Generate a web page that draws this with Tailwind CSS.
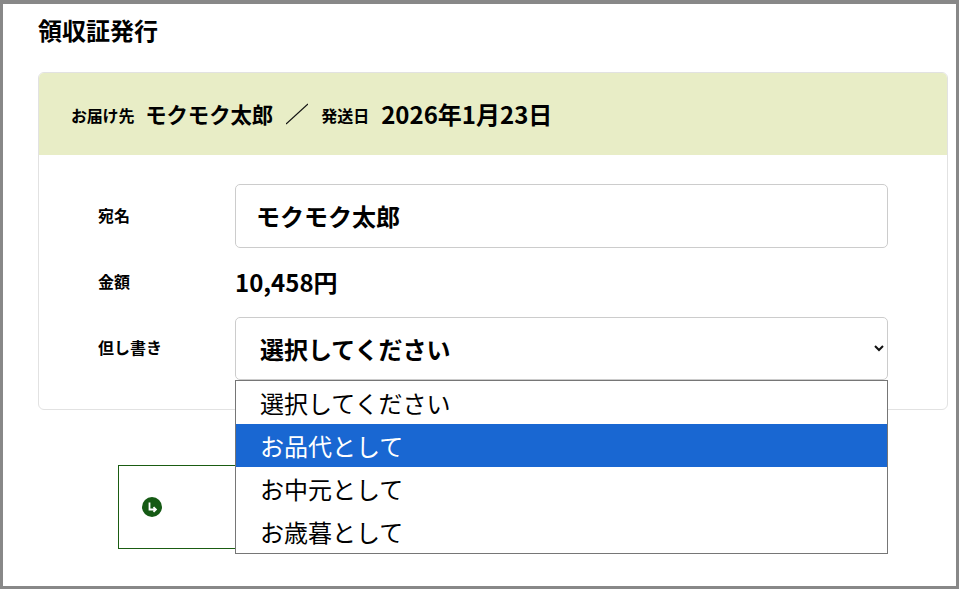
<!DOCTYPE html>
<html lang="ja">
<head>
<meta charset="utf-8">
<script src="https://cdn.jsdelivr.net/npm/@tailwindcss/browser@4"></script>
</head>
<body class="m-0 bg-white">
<div class="relative box-border h-[589px] w-[959px] overflow-hidden border-x-[3px] border-t-[4px] border-b-[3px] border-[#888888] bg-white pl-[35px] pr-[8px] font-['Noto_Sans_CJK_JP','Noto_Sans',sans-serif] text-black">
  <h1 class="m-0 h-[68px] pt-[9px] text-[24px] leading-[34px] font-bold">領収証発行</h1>
  <section class="h-[338px] overflow-hidden rounded-[6px] border border-[#e2e2e2]">
    <div class="flex h-[82px] items-center gap-[13px] bg-[#e8edc6] pl-[32px] font-bold">
      <span class="mt-[2px] text-[16px] tracking-[-0.2px]">お届け先</span>
      <span class="ml-[-2px] text-[21.33px]">モクモク太郎</span>
      <svg width="22" height="22" viewBox="0 0 22 22"><path d="M0 21L22 1" stroke="#111" stroke-width="1.2" fill="none"/></svg>
      <span class="mt-[2px] text-[16px]">発送日</span>
      <span class="ml-[-1px] text-[24px]">2026年1月23日</span>
    </div>
    <div class="grid grid-cols-[137px_653px] pl-[59px] pt-[29px] font-bold">
      <div class="flex h-[64px] items-center pb-[3px] text-[16px]">宛名</div>
      <div class="flex h-[64px] items-center rounded-[5px] border border-[#cccccc] pl-[20px] text-[24px]">モクモク太郎</div>
      <div class="flex h-[69px] items-center pb-[3px] text-[16px]">金額</div>
      <div class="flex h-[69px] items-center pb-[2px] text-[24px]">10,458円</div>
      <div class="flex h-[63px] items-center pb-[4px] text-[16px]">但し書き</div>
      <div class="flex h-[63px] items-center justify-between rounded-[5px] border border-[#cccccc] pl-[24px] pr-[3px] text-[24px]">
        <span>選択してください</span>
        <svg width="10" height="7" viewBox="0 0 10 7"><path d="M1 1l4 4 4-4" stroke="#111" stroke-width="2" fill="none"/></svg>
      </div>
    </div>
  </section>
  <div class="mt-[55px] ml-[80px] flex h-[84px] w-[400px] items-center border border-[#1a5c12] pl-[23px]">
    <svg width="20" height="20" viewBox="0 0 20 20"><circle cx="10" cy="10" r="10" fill="#155a14"/><path d="M7.5 5.5v7h6M11.5 10.2l2.4 2.3-2.4 2.3" stroke="#fff" stroke-width="1.8" fill="none"/></svg>
  </div>
  <ul class="absolute top-[376px] left-[232px] m-0 w-[653px] list-none border border-[#767676] bg-white p-0 text-[24px] leading-[43px]">
    <li class="h-[43px] pl-[24px]">選択してください</li>
    <li class="h-[43px] bg-[#1967d2] pl-[24px] text-white">お品代として</li>
    <li class="h-[43px] pl-[24px]">お中元として</li>
    <li class="h-[43px] pl-[24px]">お歳暮として</li>
  </ul>
</div>
</body>
</html>
